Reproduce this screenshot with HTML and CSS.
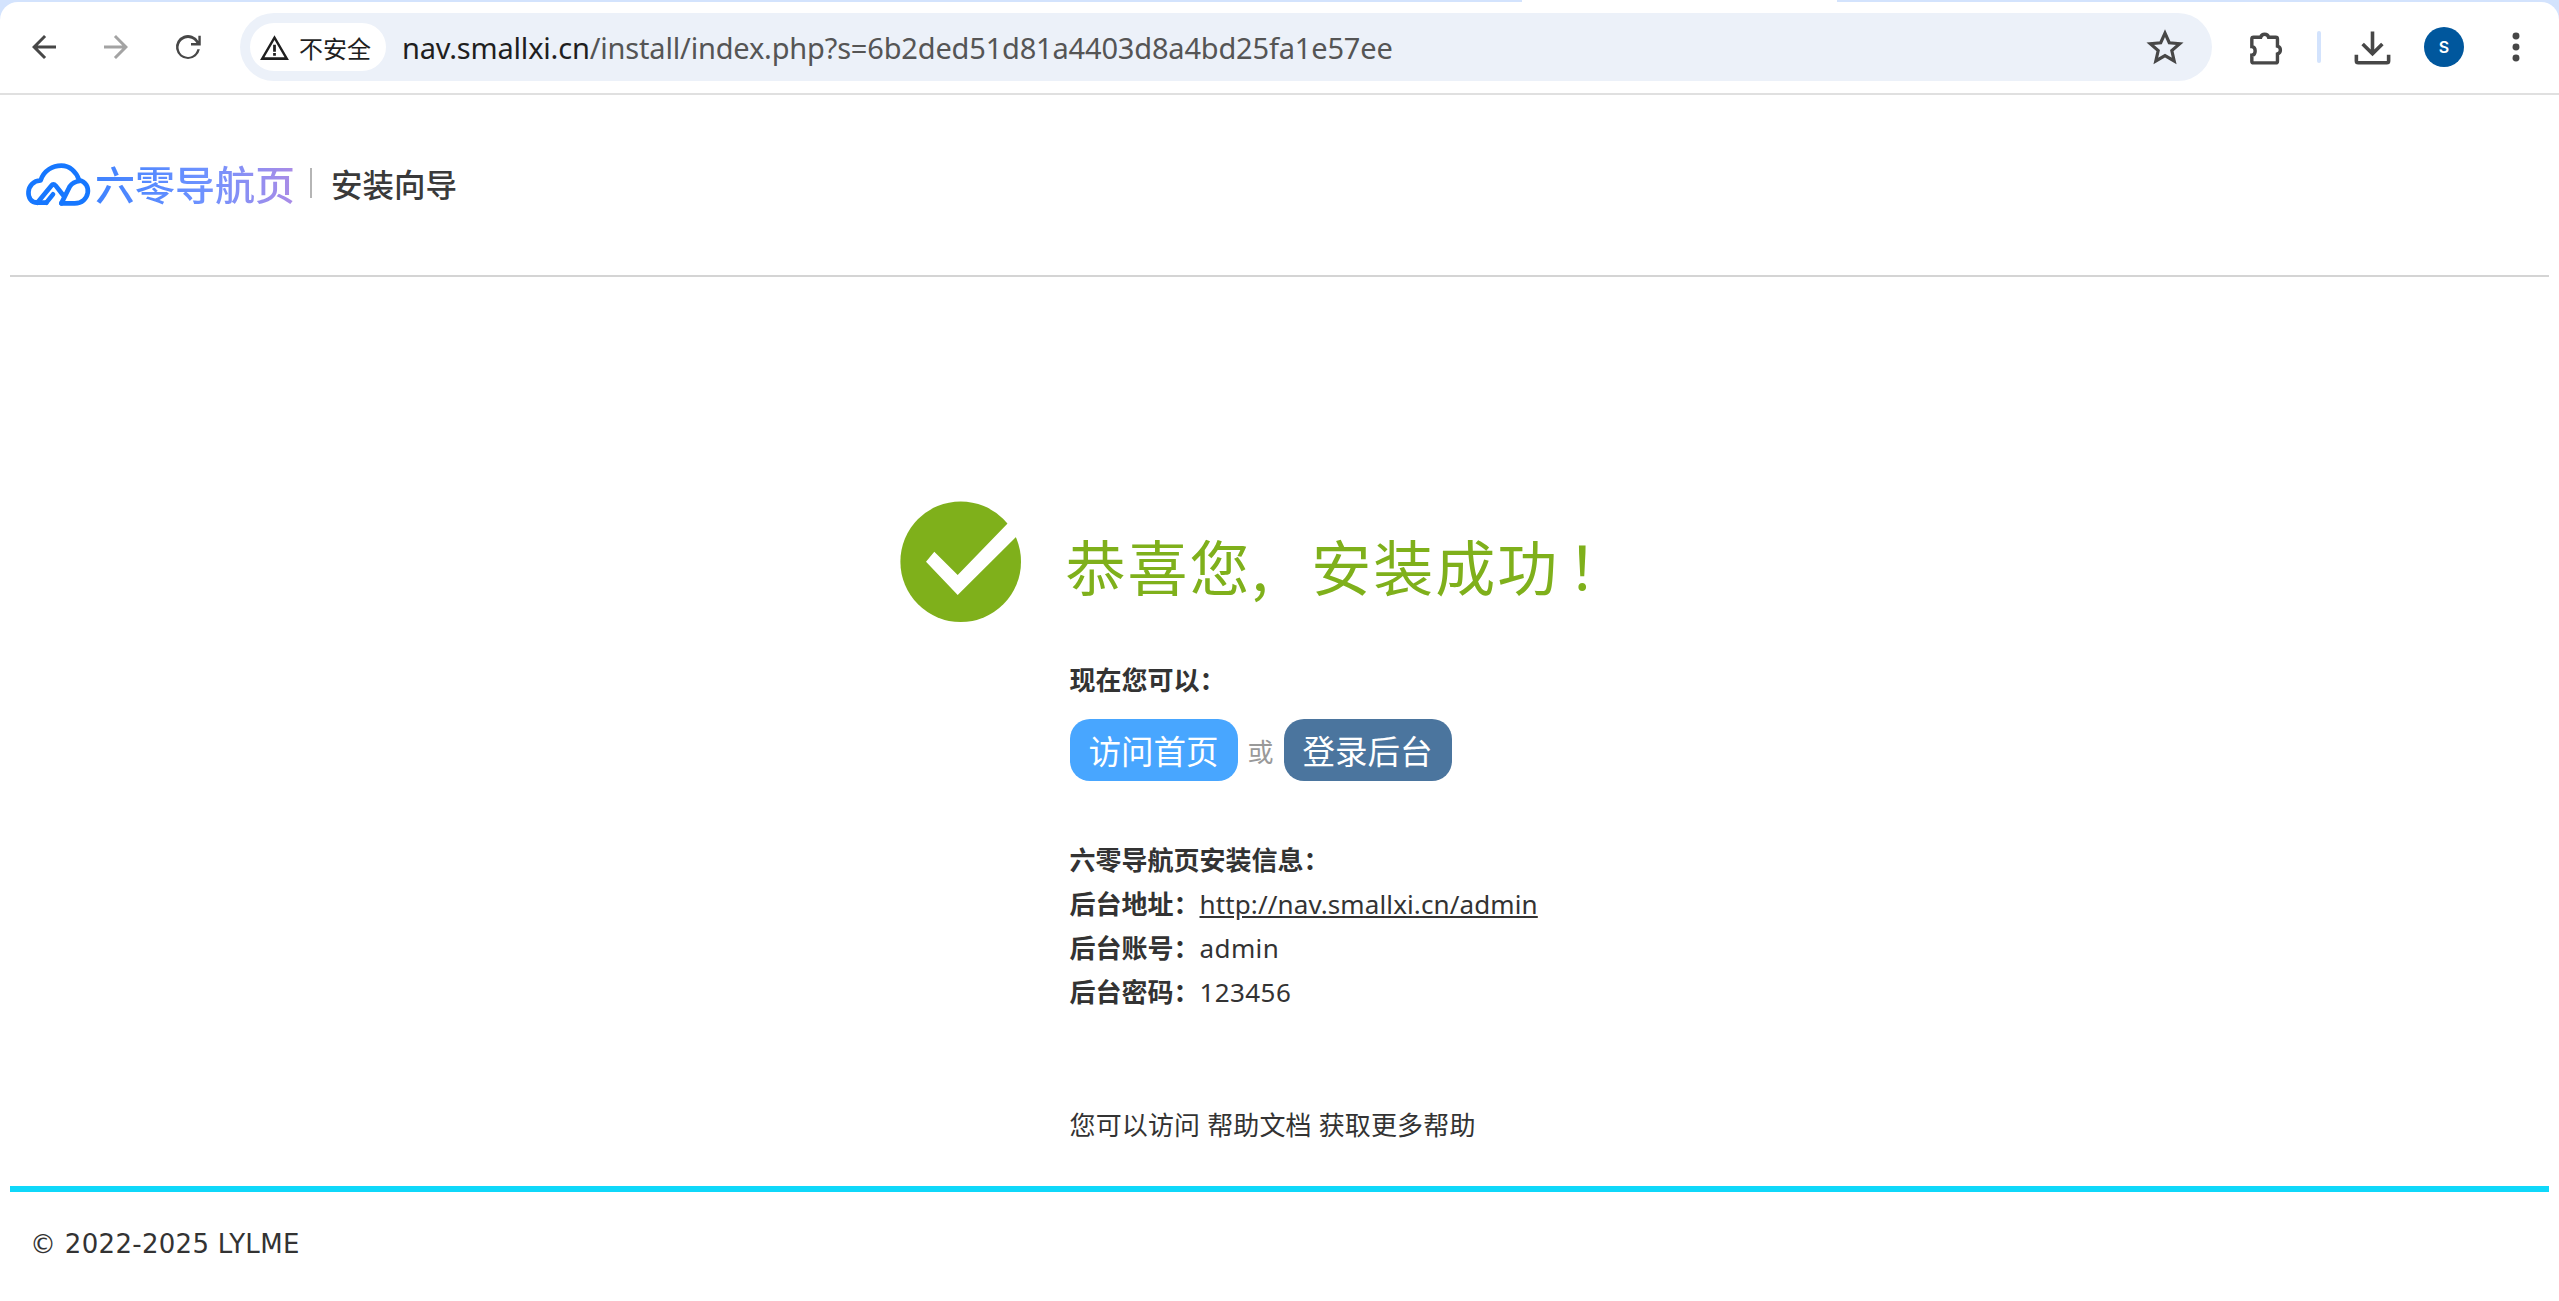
FILE: index.html
```html
<!DOCTYPE html>
<html lang="zh-CN">
<head>
<meta charset="utf-8">
<title>安装向导</title>
<link rel="stylesheet" href="styles.css">
</head>
<body>
<div class="chrome">
  <span class="tab"></span>
  <div class="toolbar">
    <div class="navs">
      <svg class="ic" viewBox="0 0 24 24"><path d="M20 11H7.8l5.6-5.6L12 4l-8 8 8 8 1.400-1.400L7.800 13H20z" fill="#474747"/></svg>
      <svg class="ic" viewBox="0 0 24 24"><path d="M4 11h12.200l-5.600-5.600L12 4l8 8-8 8-1.400-1.400 5.600-5.600H4z" fill="#a3a3a3"/></svg>
      <svg class="ic" viewBox="0 0 24 24"><path d="M12 20a8 8 0 1 1 6.900-12V4.500h1.600V11h-6.500V9.400h3.600A6.300 6.300 0 1 0 18.200 13.500h1.700A8 8 0 0 1 12 20z" fill="#474747"/></svg>
    </div>
    <div class="omnibox">
      <div class="chip">
        <svg class="warn" viewBox="0 0 24 24"><path d="M12 3 1.500 21h21zm0 3.600L19.300 19H4.700z" fill="#1f1f1f" fill-rule="evenodd"/><path d="M11 10h2v5h-2zM11 16h2v2h-2z" fill="#1f1f1f"/></svg>
        <span>不安全</span>
      </div>
      <div class="url"><span class="host">nav.smallxi.cn</span>/install/index.php?s=6b2ded51d81a4403d8a4bd25fa1e57ee</div>
      <svg class="star" viewBox="0 0 24 24"><path d="M12 3.200l2.700 6.100 6.600.6-5 4.400 1.500 6.500L12 17.400l-5.800 3.400 1.500-6.500-5-4.400 6.600-.6z" fill="none" stroke="#474747" stroke-width="2"/></svg>
    </div>
    <div class="actions">
      <svg class="ic puzzle" viewBox="0 0 24 24"><path d="M5 6h4.200a2.400 2.400 0 0 1 4.600 0H18a1 1 0 0 1 1 1v4.200a2.400 2.400 0 0 1 0 4.600V20a1 1 0 0 1-1 1H5a1 1 0 0 1-1-1v-3.500c2.600-.2 2.600-4.800 0-5V7a1 1 0 0 1 1-1z" fill="none" stroke="#474747" stroke-width="2"/></svg>
      <span class="divider"></span>
      <svg class="ic dl" viewBox="0 0 24 24"><path d="M12 3v12M6.500 10l5.500 5.500 5.500-5.500M3 16v3.500a1 1 0 0 0 1 1h16a1 1 0 0 0 1-1V16" fill="none" stroke="#474747" stroke-width="2"/></svg>
      <span class="avatar">S</span>
      <svg class="ic dots" viewBox="0 0 24 24"><circle cx="12" cy="5" r="2.200" fill="#474747"/><circle cx="12" cy="12" r="2.200" fill="#474747"/><circle cx="12" cy="19" r="2.200" fill="#474747"/></svg>
    </div>
  </div>
</div>
<div class="page">
  <header class="head">
    <svg class="cloud" viewBox="0 0 240 165"><g fill="none" stroke="#1677ff" stroke-width="14" stroke-linecap="round" stroke-linejoin="round"><path d="M85 143H58C20 143 22 78 68 76C78 45 105 32 130 32C155 32 175 50 183 75C225 85 215 145 170 145H130"/><path d="M58 143L100 92Q106 84 113 92L135 120"/><path d="M130 145L155 95Q165 80 185 78"/><path d="M85 143L105 118"/></g></svg>
    <span class="brand">六零导航页</span>
    <span class="sep"></span>
    <span class="wizard">安装向导</span>
  </header>
  <main class="main">
    <div class="result">
      <svg class="ok" viewBox="9 11 122 122"><circle cx="69.700" cy="71.700" r="60.300" fill="#7fb01b"/><path d="M43.300 61.700L35 71.700L66.700 105L126 46L118 32L66.700 85z" fill="#fff"/></svg>
      <h1 class="title">恭喜您<span class="comma">,</span>安装成功<span class="bang">！</span></h1>
    </div>
    <div class="info">
      <p class="lead"><b>现在您可以：</b></p>
      <div class="btns"><a class="btn blue">访问首页</a><span class="or">或</span><a class="btn steel">登录后台</a></div>
      <p class="row first"><b>六零导航页安装信息：</b></p>
      <p class="row"><b>后台地址：</b><a class="link">http://nav.smallxi.cn/admin</a></p>
      <p class="row"><b>后台账号：</b><span class="val">admin</span></p>
      <p class="row"><b>后台密码：</b><span class="val">123456</span></p>
      <p class="help">您可以访问 帮助文档 获取更多帮助</p>
    </div>
  </main>
  <footer class="foot">© 2022-2025 LYLME</footer>
</div>
</body>
</html>
```
FILE: styles.css
```css
* { box-sizing: border-box; }
html, body { margin: 0; padding: 0; background: #fff; }
body { width: 2559px; height: 1301px; overflow: hidden; font-family: "Noto Sans", "Noto Sans CJK SC", sans-serif; color: #333; }
.chrome { position: relative; height: 95px; background: #d3e3fd; padding-top: 2px; }
.tab { position: absolute; left: 1522px; top: 0; width: 315px; height: 2px; background: #fff; }
.toolbar { height: 93px; background: #fff; border-radius: 18px 18px 0 0; border-bottom: 2px solid #e0e0e0; display: flex; align-items: center; padding: 0 0 1px 26px; }
.ic { width: 36px; height: 36px; flex: none; }
.navs { display: flex; gap: 36px; width: 214px; }
.omnibox { width: 1972px; height: 68px; border-radius: 34px; background: #ecf1f9; display: flex; align-items: center; padding: 0 14px 0 10px; flex: none; }
.chip { height: 48px; width: 136px; border-radius: 24px; background: #fff; display: flex; align-items: center; padding-left: 8px; gap: 8px; font-size: 24px; color: #1f1f1f; font-family: "Noto Sans CJK SC", sans-serif; }
.warn { width: 33px; height: 33px; flex: none; }
.url { margin-left: 16px; flex: 1; font-size: 29px; letter-spacing: -0.180px; color: #555; white-space: nowrap; }
.host { color: #1f1f1f; }
.star { width: 38px; height: 38px; margin-right: 14px; }
.actions { display: flex; align-items: center; margin-left: 33px; }
.puzzle { width: 41px; height: 41px; }
.divider { width: 4px; height: 32px; background: #d3e3fd; border-radius: 2px; margin: 0 30px 0 31px; }
.dl { width: 43px; height: 43px; }
.avatar { width: 40px; height: 40px; border-radius: 50%; background: #00579d; color: #fff; font-size: 16px; font-weight: 600; font-family: "Inter", sans-serif; display: flex; align-items: center; justify-content: center; margin-left: 30px; }
.dots { width: 38px; height: 38px; margin-left: 33px; }
.page { padding: 0 10px; }
.head { height: 182px; border-bottom: 2px solid #d4d4d4; display: flex; align-items: center; padding: 0 0 5px 8px; }
.cloud { width: 80px; height: 55px; flex: none; }
.brand { font-family: "Noto Sans CJK SC", sans-serif; font-weight: 500; font-size: 40px; margin-left: -3px; background: linear-gradient(90deg, #3f83ff, #6f92ff 55%, #ab8ce6); -webkit-background-clip: text; background-clip: text; color: transparent; }
.sep { width: 2px; height: 30px; background: #b5b5b5; margin: 0 19px 0 15px; }
.wizard { font-family: "Noto Sans CJK SC", sans-serif; font-size: 31.500px; font-weight: 500; color: #3a3a3a; }
.main { width: 760px; margin: 0 auto; height: 909px; padding-top: 224px; }
.result { display: flex; align-items: center; height: 122px; }
.ok { width: 122px; height: 122px; flex: none; }
.title { margin: 5px 0 0 44px; font-size: 60px; font-weight: 400; line-height: 1; letter-spacing: 2px; color: #7fb01b; font-family: "Noto Sans CJK SC", sans-serif; white-space: nowrap; }
.comma { margin-right: 41px; }
.bang { padding-left: 8px; }
.info { padding-left: 170px; margin-top: 35px; font-size: 26px; line-height: 44px; }
.info p { margin: 0; }
.info b { font-weight: 700; }
.btns { display: flex; align-items: center; height: 62px; margin-top: 17px; }
.btn { width: 168px; height: 62px; border-radius: 20px; color: #fff; font-size: 32.500px; font-family: "Noto Sans CJK SC", sans-serif; display: flex; align-items: center; justify-content: center; }
.blue { background: #48a6ff; }
.steel { background: #4b759e; }
.or { width: 46px; text-align: center; color: #999; font-size: 26px; padding-top: 4px; }
.row.first { margin-top: 57px; }
.link { color: #333; text-decoration: underline; letter-spacing: 0.120px; }
.val { letter-spacing: 0.400px; }
.help { margin-top: 89px !important; letter-spacing: 0.150px; }
.foot { border-top: 6px solid #0fd8fa; padding: 30px 0 0 20px; font-family: "DejaVu Sans", sans-serif; font-size: 26px; letter-spacing: 0.300px; line-height: 44px; color: #333; }
```
